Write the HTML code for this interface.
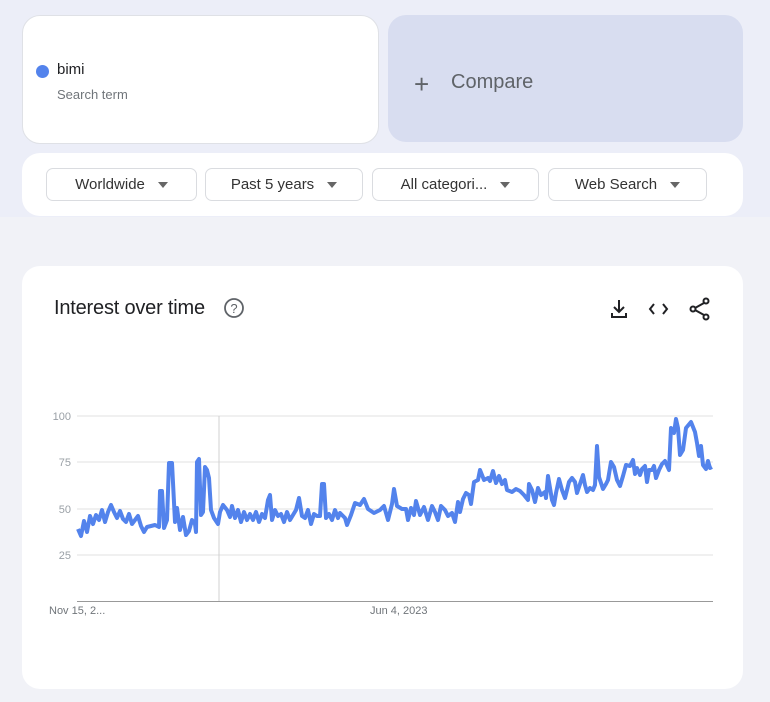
<!DOCTYPE html>
<html><head><style>
body{margin:0;width:770px;height:702px;background:#f1f2f7;font-family:"Liberation Sans",sans-serif;position:relative;overflow:hidden}
.top{position:absolute;left:0;top:0;width:770px;height:217px;background:#eceef8}
.card{position:absolute;background:#fff;border-radius:18px}
.dd{position:absolute;top:168px;height:33px;border:1px solid #dadce0;border-radius:7px;background:#fff;font-size:15px;color:#333;display:flex;align-items:center;justify-content:center;box-sizing:border-box}
.dd:after{content:"";border-left:5px solid transparent;border-right:5px solid transparent;border-top:6px solid #666;margin-left:13px}
</style></head><body>
<div class="top"></div>
<div class="card" style="left:22px;top:15px;width:357px;height:129px;border:1px solid #dfe1e6;box-sizing:border-box"></div>
<div style="position:absolute;left:36px;top:65px;width:13px;height:13px;border-radius:50%;background:#5383ec"></div>
<div style="position:absolute;left:57px;top:61px;font-size:15px;color:#202124">bimi</div>
<div style="position:absolute;left:57px;top:87px;font-size:13px;color:#70757a">Search term</div>
<div style="position:absolute;left:388px;top:15px;width:355px;height:127px;background:#d8ddf0;border-radius:18px"></div>
<div style="position:absolute;left:414px;top:69px;font-size:26px;color:#5f6368;font-weight:300">+</div>
<div style="position:absolute;left:451px;top:71px;font-size:20px;color:#5f6368">Compare</div>
<div class="card" style="left:22px;top:153px;width:721px;height:63px"></div>
<div class="dd" style="left:46px;width:151px">Worldwide</div>
<div class="dd" style="left:205px;width:158px">Past 5 years</div>
<div class="dd" style="left:372px;width:167px">All categori...</div>
<div class="dd" style="left:548px;width:159px">Web Search</div>
<div class="card" style="left:22px;top:266px;width:721px;height:423px"></div>
<div style="position:absolute;left:54px;top:297px;font-size:20px;color:#202124;letter-spacing:-0.2px">Interest over time</div>
<svg style="position:absolute;left:0;top:0" width="770" height="702">
<circle cx="234" cy="308" r="9" fill="none" stroke="#5f6368" stroke-width="1.8"/>
<text x="234" y="313" font-size="13" text-anchor="middle" fill="#5f6368" font-family="Liberation Sans">?</text>
<g stroke="#202124" stroke-width="2" fill="none">
<path d="M619 300v12M614 307l5 5 5-5M612 313v4h14v-4"/>
<path d="M654 304l-4 5 4 5M663 304l4 5-4 5"/>
<circle cx="706" cy="301" r="2.5"/><circle cx="693" cy="309" r="2.5"/><circle cx="706" cy="317" r="2.5"/>
<path d="M695 308l9-5M695 310l9 5"/>
</g>
<g stroke="#e0e0e0" stroke-width="1">
<line x1="77" y1="416" x2="713" y2="416"/><line x1="77" y1="462" x2="713" y2="462"/>
<line x1="77" y1="509" x2="713" y2="509"/><line x1="77" y1="555" x2="713" y2="555"/>
<line x1="219" y1="416" x2="219" y2="601" stroke="#d0d0d0"/>
</g>
<line x1="77" y1="601.5" x2="713" y2="601.5" stroke="#999"/>
<g font-size="11" fill="#9aa0a6" font-family="Liberation Sans" text-anchor="end">
<text x="71" y="420">100</text><text x="71" y="466">75</text><text x="71" y="513">50</text><text x="71" y="559">25</text>
</g>
<g font-size="11" fill="#70757a" font-family="Liberation Sans">
<text x="49" y="614">Nov 15, 2...</text><text x="370" y="614">Jun 4, 2023</text>
</g>
<polyline fill="none" stroke="#5383ec" stroke-width="4" stroke-linejoin="round" points="78,529 81,536 84,521 87,532 90,516 93,524 96,515 99,520 102,510 105,522 108,512 111,505 114,512 117,518 120,511 123,519 126,522 129,514 132,524 135,520 138,516 141,526 144,532 147,527 151,526 155,525 159,527 160,491 162,491 164,528 167,520 169,463 172,463 175,522 177,508 180,530 183,517 186,535 189,531 192,520 195,524 196,532 197,462 199,459 201,515 203,512 205,467 207,470 209,478 211,510 214,518 218,524 220,512 223,505 227,510 230,517 232,506 235,518 238,510 241,522 244,512 247,520 250,514 253,520 256,512 259,522 262,514 265,518 268,500 270,495 272,520 275,510 278,516 281,514 284,522 287,512 290,520 293,515 296,510 299,498 302,516 305,518 308,510 311,524 314,514 317,516 320,516 322,484 324,484 326,518 329,514 332,520 335,510 338,518 340,513 345,518 347,525 351,515 355,503 360,505 364,499 368,509 374,513 380,510 384,506 386,513 388,520 392,504 394,489 397,506 402,509 406,509 408,520 411,508 414,515 416,501 420,515 424,507 428,520 432,506 435,512 438,520 441,506 445,510 448,516 452,513 455,522 458,502 460,512 463,499 466,493 469,495 471,504 474,482 478,480 480,470 484,480 488,478 490,481 493,471 496,483 499,476 502,484 505,480 507,490 512,492 516,489 520,491 524,495 528,500 529,484 532,490 535,502 538,488 541,495 545,492 546,498 548,476 552,500 554,505 556,493 559,479 562,490 565,498 569,482 572,478 575,482 577,493 580,484 583,475 585,485 587,492 590,488 593,490 595,485 597,446 599,477 603,489 606,484 608,480 611,462 614,467 617,480 620,486 623,476 626,465 630,466 633,460 635,474 637,468 640,475 642,469 645,466 647,482 649,470 652,470 654,466 656,478 659,470 662,464 665,461 669,470 671,428 674,433 676,419 678,428 680,455 683,450 686,428 691,422 695,432 697,443 699,456 701,446 703,465 706,469 708,461 710,468 712,467"/>
</svg>
</body></html>
